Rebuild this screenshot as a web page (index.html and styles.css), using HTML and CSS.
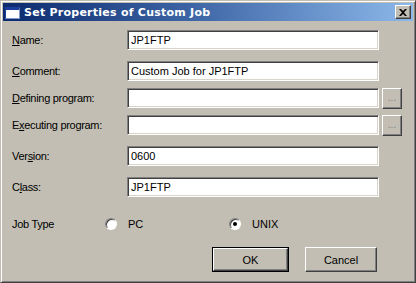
FILE: index.html
```html
<!DOCTYPE html>
<html lang="en">
<head>
    <meta charset="UTF-8">
    <title>Set Properties of Custom Job</title>
    <link rel="stylesheet" href="styles.css">
</head>
<body>
    <div class="window">
        <div class="titlebar">
            <span class="app-icon"></span>
            <span class="title">Set Properties of Custom Job</span>
            <span class="close-btn">
                <svg width="8" height="7" viewBox="0 0 8 7"><path d="M0 0h2l2 2 2-2h2L5 3.5 8 7H6L4 5 2 7H0l3-3.5z" fill="#000"/></svg>
            </span>
        </div>
        <div class="content">
            <div class="row first">
                <label><u>N</u>ame:</label>
                <div class="field">JP1FTP</div>
            </div>
            <div class="row gap-lg">
                <label><u>C</u>omment:</label>
                <div class="field">Custom Job for JP1FTP</div>
            </div>
            <div class="row gap-sm">
                <label><u>D</u>efining program:</label>
                <div class="field"></div>
                <span class="browse">...</span>
            </div>
            <div class="row gap-sm">
                <label>E<u>x</u>ecuting program:</label>
                <div class="field"></div>
                <span class="browse">...</span>
            </div>
            <div class="row gap-lg">
                <label>Ver<u>s</u>ion:</label>
                <div class="field">0600</div>
            </div>
            <div class="row gap-lg">
                <label>C<u>l</u>ass:</label>
                <div class="field">JP1FTP</div>
            </div>
            <div class="jobtype">
                <span class="jt-label">Job Type</span>
                <span class="radio"></span><span class="radio-text">PC</span>
                <span class="radio checked"></span><span class="radio-text">UNIX</span>
            </div>
            <div class="actions">
                <span class="btn default"><span class="btn-inner">OK</span></span>
                <span class="btn cancel">Cancel</span>
            </div>
        </div>
    </div>
</body>
</html>
```

FILE: styles.css
```css
body {
    margin: 0;
    padding: 0;
    background-color: #c2beb3;
    font-family: "Liberation Sans", Arial, sans-serif;
    font-size: 11px;
    color: #000;
}
.window {
    width: 416px;
    height: 283px;
    box-sizing: border-box;
    background-color: #c2beb3;
    border-top: 1px solid #c2beb3;
    border-left: 1px solid #c2beb3;
    border-right: 1px solid #404040;
    border-bottom: 1px solid #404040;
    box-shadow: inset 1px 1px #fff, inset -1px -1px #808080;
    padding: 2px;
}
.titlebar {
    height: 18px;
    display: flex;
    align-items: center;
    background: linear-gradient(to right, #0c2a6e, #3c64a4 45%, #8cb8ea);
    color: #fff;
    padding-left: 2px;
}
.app-icon {
    width: 15px;
    height: 12px;
    box-sizing: border-box;
    background: #fff;
    border-top: 3px solid #1a3f9a;
    border-left: 1px solid #1a3f9a;
    border-right: 1px solid #8098c8;
    border-bottom: 1px solid #8098c8;
    margin-top: 1px;
}
.title {
    margin-left: 4px;
    font-weight: bold;
    font-size: 11px;
    font-family: "DejaVu Sans", sans-serif;
    letter-spacing: 0.25px;
}
.close-btn {
    margin-left: auto;
    margin-right: 2px;
    width: 16px;
    height: 14px;
    box-sizing: border-box;
    background: #c2beb3;
    border-top: 1px solid #fff;
    border-left: 1px solid #fff;
    border-right: 1px solid #404040;
    border-bottom: 1px solid #404040;
    box-shadow: inset -1px -1px #808080;
    display: flex;
    align-items: center;
    justify-content: center;
}
.content {
    padding-left: 9px;
}
.row {
    display: flex;
    align-items: center;
    height: 20px;
}
.row.first {
    margin-top: 9px;
}
.row.gap-lg {
    margin-top: 11px;
}
.row.gap-sm {
    margin-top: 7px;
}
.row label {
    width: 115px;
    flex: none;
    letter-spacing: -0.3px;
}
.field {
    width: 252px;
    height: 20px;
    flex: none;
    box-sizing: border-box;
    background: #fff;
    border-top: 1px solid #808080;
    border-left: 1px solid #808080;
    border-right: 1px solid #fff;
    border-bottom: 1px solid #fff;
    box-shadow: inset 1px 1px #404040, inset -1px -1px #d8d4ca;
    padding: 2px 3px;
    line-height: 15px;
}
.browse {
    width: 20px;
    height: 21px;
    flex: none;
    box-sizing: border-box;
    margin-left: 3px;
    background: #c2beb3;
    border-top: 1px solid #fff;
    border-left: 1px solid #fff;
    border-right: 1px solid #404040;
    border-bottom: 1px solid #404040;
    box-shadow: inset -1px -1px #808080;
    color: #808080;
    text-align: center;
    line-height: 17px;
    font-size: 10px;
}
.jobtype {
    display: flex;
    align-items: center;
    height: 13px;
    margin-top: 20px;
}
.jt-label {
    width: 93px;
    letter-spacing: -0.3px;
}
.radio {
    width: 12px;
    height: 12px;
    box-sizing: border-box;
    border-radius: 50%;
    background: #fff;
    border-top: 1px solid #808080;
    border-left: 1px solid #808080;
    border-right: 1px solid #fff;
    border-bottom: 1px solid #fff;
    box-shadow: inset 1px 1px #404040;
    position: relative;
}
.radio.checked::after {
    content: "";
    position: absolute;
    left: 3px;
    top: 3px;
    width: 4px;
    height: 4px;
    border-radius: 50%;
    background: #000;
}
.radio-text {
    margin-left: 11px;
    width: 101px;
}
.actions {
    display: flex;
    margin-top: 17px;
    padding-left: 200px;
}
.btn {
    box-sizing: border-box;
    height: 25px;
    display: flex;
    align-items: center;
    justify-content: center;
}
.btn.default {
    width: 77px;
    border: 1px solid #000;
}
.btn-inner {
    width: 100%;
    height: 100%;
    box-sizing: border-box;
    display: flex;
    align-items: center;
    justify-content: center;
    border-top: 1px solid #fff;
    border-left: 1px solid #fff;
    border-right: 1px solid #404040;
    border-bottom: 1px solid #404040;
    box-shadow: inset -1px -1px #808080;
}
.btn.cancel {
    width: 72px;
    margin-left: 16px;
    border-top: 1px solid #fff;
    border-left: 1px solid #fff;
    border-right: 1px solid #404040;
    border-bottom: 1px solid #404040;
    box-shadow: inset -1px -1px #808080;
}
```
